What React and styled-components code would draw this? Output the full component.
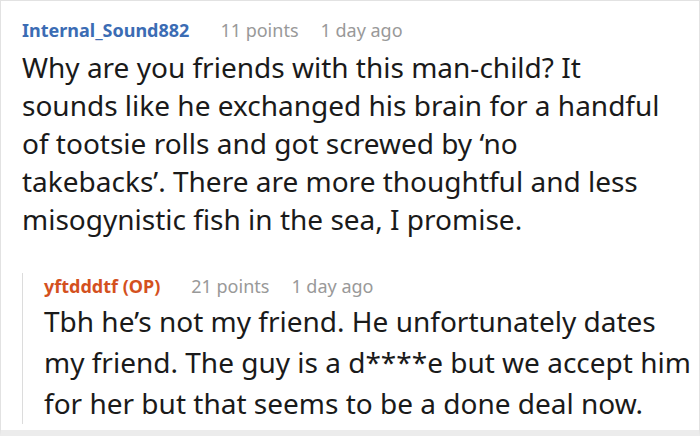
import styled, { createGlobalStyle } from "styled-components";

const GlobalStyle = createGlobalStyle`
    html, body {
        margin: 0;
        padding: 0;
        background: #ffffff;
    }
    body {
        font-family: "Noto Sans", "Open Sans", sans-serif;
    }
`;

const Frame = styled.div`
    width: 700px;
    height: 436px;
    box-sizing: border-box;
    border: 1px solid #e2e2e2;
    border-bottom: 6px solid #ececec;
    overflow: hidden;
    padding: 16px 4px 0 21px;
`;

const Comment = styled.div`
    display: flex;
    flex-direction: column;
`;

const Meta = styled.div`
    display: flex;
    align-items: baseline;
    line-height: 26px;
    font-size: 18px;
    margin-bottom: ${(p) => (p.$reply ? "2px" : "5px")};
`;

const Author = styled.span`
    font-weight: 700;
    color: ${(p) => (p.$op ? "#d4511e" : "#3b6cb4")};
    margin-right: 31px;
`;

const Stat = styled.span`
    color: #999999;
    margin-right: 22px;
`;

const Body = styled.p`
    margin: 0;
    max-width: 638px;
    font-size: 28px;
    line-height: 38px;
    color: #1a1a1a;
`;

const Reply = styled.div`
    margin-top: 35px;
    padding-left: 21px;
    border-left: 1px solid #dcdcdc;
`;

const ReplyBody = styled(Body)`
    max-width: none;
    line-height: 41px;
`;

export default function App() {
    return (
        <>
            <GlobalStyle />
            <Frame>
                <Comment>
                    <Meta>
                        <Author>Internal_Sound882</Author>
                        <Stat>11 points</Stat>
                        <Stat>1 day ago</Stat>
                    </Meta>
                    <Body>
                        Why are you friends with this man-child? It sounds
                        like he exchanged his brain for a handful of tootsie
                        rolls and got screwed by ‘no takebacks’. There are
                        more thoughtful and less misogynistic fish in the sea,
                        I promise.
                    </Body>
                </Comment>
                <Reply>
                    <Meta $reply>
                        <Author $op>yftdddtf (OP)</Author>
                        <Stat>21 points</Stat>
                        <Stat>1 day ago</Stat>
                    </Meta>
                    <ReplyBody>
                        Tbh he’s not my friend. He unfortunately dates my
                        friend. The guy is a d****e but we accept him for her
                        but that seems to be a done deal now.
                    </ReplyBody>
                </Reply>
            </Frame>
        </>
    );
}
